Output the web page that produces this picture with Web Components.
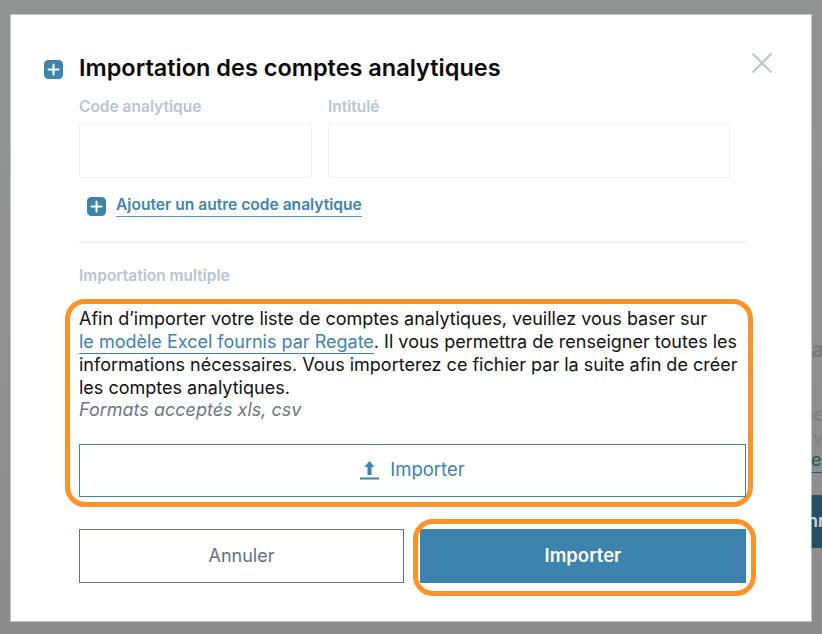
<!DOCTYPE html>
<html lang="fr">
<head>
<meta charset="utf-8">
<title>Importation des comptes analytiques</title>
<style>
  body { margin: 0; font-family: Inter, "Liberation Sans", sans-serif; }
</style>
</head>
<body>
<app-backdrop>
  <import-modal heading="Importation des comptes analytiques">
    <add-icon slot="icon"></add-icon>
    <field-row></field-row>
    <add-link>Ajouter un autre code analytique</add-link>
    <hr-line></hr-line>
    <field-label class="multi">Importation multiple</field-label>
    <highlight-box>
      <import-notice></import-notice>
      <upload-button>Importer</upload-button>
    </highlight-box>
    <modal-actions></modal-actions>
  </import-modal>
</app-backdrop>

<script>
// fond gris avec le bout de la page qui depasse a droite
class AppBackdrop extends HTMLElement {
  constructor() {
    super();
    this.attachShadow({ mode: "open" });
    this.shadowRoot.innerHTML = `
      <style>
        :host { display: block; position: relative; width: 822px; height: 634px; overflow: hidden;
          padding: 15px 11px 13px; box-sizing: border-box;
          background: linear-gradient(#929493, #8c8c8c); }
        .peek { position: absolute; left: 811px; white-space: nowrap; }
        .a { top: 337px; left: 812px; font-size: 21px; font-weight: 700; color: #73797e; }
        .ne { top: 404px; left: 803px; font-size: 18px; color: #7b7f81; }
        .v { top: 427px; left: 813px; font-size: 18px; color: #7b7f81; }
        .e { top: 449px; left: 811px; font-size: 18px; line-height: 22px; color: #2c566b; border-bottom: 1px solid #2c566b; width: 11px; padding-bottom: 1px; }
        .btn { top: 495px; width: 11px; height: 53px; background: #254f66; color: #c9d2d6;
          font-size: 18px; font-weight: 600; line-height: 51px; overflow: hidden; }
        .btn span { margin-left: -4px; }
      </style>
      <div class="peek a">a</div>
      <div class="peek ne">ne</div>
      <div class="peek v">v</div>
      <div class="peek e">e</div>
      <div class="peek btn"><span>nr</span></div>
      <slot></slot>
    `;
  }
}

class ImportModal extends HTMLElement {
  constructor() {
    super();
    this.attachShadow({ mode: "open" });
  }

  connectedCallback() {
    this.shadowRoot.innerHTML = `
      <style>
        :host { display: block; position: relative; width: 800px; height: 606px; box-sizing: border-box;
          background: #fff; box-shadow: 0 0 0 1px rgba(235, 238, 245, .55); }
        header { display: flex; align-items: center; gap: 16px; height: 30px; padding: 38px 0 0 33px; }
        h1 { margin: 0; font-size: 23.5px; font-weight: 600; line-height: 30px; color: #0a0a0a; }
        ::slotted(add-icon) { margin-top: 3px; }
        .close { position: absolute; top: 37px; left: 740px; width: 22px; height: 22px; }
        main { padding: 15px 65px 0 68px; }
      </style>
      <header>
        <slot name="icon"></slot>
        <h1>${this.getAttribute("heading")}</h1>
      </header>
      <svg class="close" viewBox="0 0 22 22" fill="none" stroke="#bcc5d3" stroke-width="2">
        <path d="M1.5 1.5 L20.5 20.5 M20.5 1.5 L1.5 20.5"/>
      </svg>
      <main><slot></slot></main>
    `;
  }
}

class AddIcon extends HTMLElement {
  constructor() {
    super();
    this.attachShadow({ mode: "open" });
    this.shadowRoot.innerHTML = `
      <style>
        :host { display: block; width: 19px; height: 19px; flex: none; }
        svg { display: block; }
      </style>
      <svg width="19" height="19" viewBox="0 0 19 19">
        <rect width="19" height="19" rx="4.5" fill="#3c83ad"/>
        <path d="M9.5 4.5 V14.5 M4.5 9.5 H14.5" stroke="#fff" stroke-width="2" stroke-linecap="round"/>
      </svg>
    `;
  }
}

class FieldLabel extends HTMLElement {
  constructor() {
    super();
    this.attachShadow({ mode: "open" });
    this.shadowRoot.innerHTML = `
      <style>
        :host { display: block; font-size: 15.5px; font-weight: 600; line-height: 18px; color: #b9c3d1; }
        :host(.multi) { margin: 24px 0 14px; }
      </style>
      <slot></slot>
    `;
  }
}

class FieldRow extends HTMLElement {
  constructor() {
    super();
    this.attachShadow({ mode: "open" });
    this.shadowRoot.innerHTML = `
      <style>
        :host { display: grid; grid-template-columns: 233px 402px; column-gap: 16px; }
        .box { height: 55px; margin-top: 7px; box-sizing: border-box;
          border: 1px solid #eff1f6; border-radius: 2px; }
      </style>
      <div><field-label>Code analytique</field-label><div class="box"></div></div>
      <div><field-label>Intitulé</field-label><div class="box"></div></div>
    `;
  }
}

class AddLink extends HTMLElement {
  constructor() {
    super();
    this.attachShadow({ mode: "open" });
    this.shadowRoot.innerHTML = `
      <style>
        :host { display: flex; align-items: flex-end; gap: 10px; margin: 19px 0 0 8px; height: 20px; }
        add-icon { margin-bottom: 1px; }
        span { font-size: 15.6px; font-weight: 600; line-height: 20px; padding-bottom: 1px; color: #3c83ad; border-bottom: 1px solid #4d97c6; }
      </style>
      <add-icon></add-icon>
      <span><slot></slot></span>
    `;
  }
}

class HrLine extends HTMLElement {
  constructor() {
    super();
    this.attachShadow({ mode: "open" });
    this.shadowRoot.innerHTML = `
      <style>
        :host { display: block; height: 2px; margin-top: 24px; background: #eff1f6; }
      </style>
    `;
  }
}

// cadre orange d'annotation autour du bloc d'import
class HighlightBox extends HTMLElement {
  constructor() {
    super();
    this.attachShadow({ mode: "open" });
    this.shadowRoot.innerHTML = `
      <style>
        :host { display: block; margin: 0 -7px 0 -14px; padding: 3px 2px 5px 9px;
          border: 5px solid #fb9329; border-radius: 20px; }
      </style>
      <slot></slot>
    `;
  }
}

class ImportNotice extends HTMLElement {
  constructor() {
    super();
    this.attachShadow({ mode: "open" });
    this.shadowRoot.innerHTML = `
      <style>
        :host { display: block; font-size: 18px; line-height: 23px; color: #111; }
        a { color: #3c83ad; text-decoration: none; white-space: nowrap; border-bottom: 1px solid #3c83ad; padding-bottom: 1px; }
        em { display: block; color: #6b7683; margin-top: -1px; }
      </style>
      Afin d’importer votre liste de comptes analytiques, veuillez vous baser sur
      <a href="#">le modèle Excel fournis par Regate</a>. Il vous permettra de renseigner toutes les informations nécessaires. Vous importerez ce fichier par la suite afin de créer les comptes analytiques.
      <em>Formats acceptés xls, csv</em>
    `;
  }
}

class UploadButton extends HTMLElement {
  constructor() {
    super();
    this.attachShadow({ mode: "open" });
    this.shadowRoot.innerHTML = `
      <style>
        :host { display: flex; align-items: center; justify-content: center; gap: 11px; height: 53px;
          margin-top: 23px; padding-bottom: 3px; box-sizing: border-box; border: 1px solid #3c83ad;
          font-size: 18.5px; color: #3c83ad; }
        svg { display: block; margin-top: 3px; }
      </style>
      <svg width="19" height="19" viewBox="0 0 19 19" fill="#3c83ad">
        <path d="M9.5 0 L14.5 6 H11.5 V14 H7.5 V6 H4.5 Z"/>
        <rect y="16.5" width="19" height="2"/>
      </svg>
      <span><slot></slot></span>
    `;
  }
}

class ModalActions extends HTMLElement {
  constructor() {
    super();
    this.attachShadow({ mode: "open" });
    this.shadowRoot.innerHTML = `
      <style>
        :host { display: grid; grid-template-columns: 325px 326px; column-gap: 16px; margin-top: 22px; }
        button { height: 54px; margin: 0; padding: 0 0 2px; font: inherit; font-size: 18px; border-radius: 0; }
        .cancel { background: #fff; border: 1px solid #66717e; color: #66717e; }
        .wrap { position: relative; }
        .submit { display: block; width: 100%; background: #3c83ad; border: 0; color: #fff; font-size: 18.5px; font-weight: 600; }
        .ring { position: absolute; top: -10px; right: -10px; bottom: -13px; left: -7px;
          border: 5px solid #fb9329; border-radius: 20px; }
      </style>
      <button class="cancel">Annuler</button>
      <div class="wrap">
        <button class="submit">Importer</button>
        <div class="ring"></div>
      </div>
    `;
  }
}

customElements.define("app-backdrop", AppBackdrop);
customElements.define("import-modal", ImportModal);
customElements.define("add-icon", AddIcon);
customElements.define("field-label", FieldLabel);
customElements.define("field-row", FieldRow);
customElements.define("add-link", AddLink);
customElements.define("hr-line", HrLine);
customElements.define("highlight-box", HighlightBox);
customElements.define("import-notice", ImportNotice);
customElements.define("upload-button", UploadButton);
customElements.define("modal-actions", ModalActions);
</script>
</body>
</html>
